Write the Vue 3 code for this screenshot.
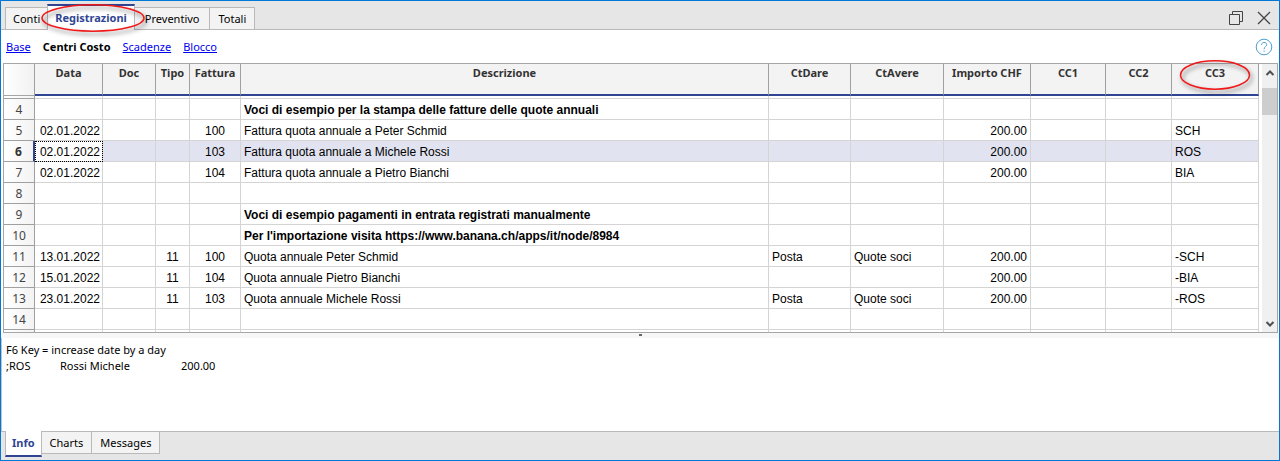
<script setup>
import { ref } from 'vue'

const tabs = ['Conti', 'Registrazioni', 'Preventivo', 'Totali']
const activeTab = ref('Registrazioni')

const views = ['Base', 'Centri Costo', 'Scadenze', 'Blocco']
const activeView = ref('Centri Costo')

const panels = ['Info', 'Charts', 'Messages']
const activePanel = ref('Info')

const columns = [
  { key: 'date', label: 'Data' },
  { key: 'doc', label: 'Doc' },
  { key: 'type', label: 'Tipo' },
  { key: 'invoice', label: 'Fattura' },
  { key: 'text', label: 'Descrizione' },
  { key: 'debit', label: 'CtDare' },
  { key: 'credit', label: 'CtAvere' },
  { key: 'amount', label: 'Importo CHF' },
  { key: 'cc1', label: 'CC1' },
  { key: 'cc2', label: 'CC2' },
  { key: 'cc3', label: 'CC3' },
]

const rows = [
  { n: 4, bold: true, text: 'Voci di esempio per la stampa delle fatture delle quote annuali' },
  { n: 5, date: '02.01.2022', invoice: '100', text: 'Fattura quota annuale a Peter Schmid', amount: '200.00', cc3: 'SCH' },
  { n: 6, date: '02.01.2022', invoice: '103', text: 'Fattura quota annuale a Michele Rossi', amount: '200.00', cc3: 'ROS' },
  { n: 7, date: '02.01.2022', invoice: '104', text: 'Fattura quota annuale a Pietro Bianchi', amount: '200.00', cc3: 'BIA' },
  { n: 8 },
  { n: 9, bold: true, text: 'Voci di esempio pagamenti in entrata registrati manualmente' },
  { n: 10, bold: true, text: "Per l'importazione visita https://www.banana.ch/apps/it/node/8984" },
  { n: 11, date: '13.01.2022', type: '11', invoice: '100', text: 'Quota annuale Peter Schmid', debit: 'Posta', credit: 'Quote soci', amount: '200.00', cc3: '-SCH' },
  { n: 12, date: '15.01.2022', type: '11', invoice: '104', text: 'Quota annuale Pietro Bianchi', amount: '200.00', cc3: '-BIA' },
  { n: 13, date: '23.01.2022', type: '11', invoice: '103', text: 'Quota annuale Michele Rossi', debit: 'Posta', credit: 'Quote soci', amount: '200.00', cc3: '-ROS' },
  { n: 14 },
]
const selected = ref(6)
</script>

<template>
  <main class="window">
    <header class="titlebar">
      <nav class="tabs" role="tablist">
        <button
          v-for="t in tabs" :key="t" type="button" role="tab" class="tab"
          :class="{ active: t === activeTab }" :aria-selected="t === activeTab"
          @click="activeTab = t"
        >
          {{ t }}
          <svg v-if="t === 'Registrazioni'" class="ring ring-tab" viewBox="0 0 112 36" aria-hidden="true">
            <ellipse cx="53" cy="16" rx="51" ry="13.2" />
          </svg>
        </button>
      </nav>
      <div class="controls">
        <button type="button" aria-label="Ripristina">
          <svg width="16" height="16" viewBox="0 0 16 16">
            <path d="M1.500 4.500h10v10h-10zM4.500 4.500v-3h10v10h-3" />
          </svg>
        </button>
        <button type="button" aria-label="Chiudi">
          <svg width="16" height="16" viewBox="0 0 16 16">
            <path class="cross" d="M2 2l12 12M14 2L2 14" />
          </svg>
        </button>
      </div>
    </header>

    <nav class="views">
      <template v-for="v in views" :key="v">
        <strong v-if="v === activeView">{{ v }}</strong>
        <a v-else href="#" @click.prevent="activeView = v">{{ v }}</a>
      </template>
      <button type="button" class="help" aria-label="Aiuto">
        <svg width="18" height="18" viewBox="0 0 18 18">
          <circle cx="9" cy="9" r="7.800" />
          <path d="M6.500 7c0-3.500 5.200-3.300 5.200-.4 0 2-2.600 2-2.600 4.600M9.100 12.600v1.300" />
        </svg>
      </button>
    </nav>

    <section class="grid">
      <table>
        <colgroup>
          <col class="c-n"><col v-for="c in columns" :key="c.key" :class="'c-' + c.key">
        </colgroup>
        <thead>
          <tr>
            <th class="corner"></th>
            <th v-for="c in columns" :key="c.key" scope="col">
              {{ c.label }}
              <svg v-if="c.key === 'cc3'" class="ring ring-col" viewBox="0 0 80 40" aria-hidden="true">
                <ellipse cx="37" cy="17" rx="34.500" ry="14.200" />
              </svg>
            </th>
          </tr>
        </thead>
        <tbody>
          <tr class="sliver"><th></th><td v-for="c in columns" :key="c.key"></td></tr>
          <tr
            v-for="r in rows" :key="r.n" :class="{ bold: r.bold, selected: r.n === selected }"
            @click="selected = r.n"
          >
            <th scope="row">{{ r.n }}</th>
            <td v-for="c in columns" :key="c.key" :class="'d-' + c.key">{{ r[c.key] }}</td>
          </tr>
          <tr class="sliver last"><th></th><td v-for="c in columns" :key="c.key"></td></tr>
        </tbody>
      </table>
      <div class="scrollbar">
        <button type="button" aria-label="Su">
          <svg width="10" height="8" viewBox="0 0 10 8"><path d="M1.500 6L5 2.500 8.500 6" /></svg>
        </button>
        <div class="track"><div class="thumb"></div></div>
        <button type="button" aria-label="Giù">
          <svg width="10" height="8" viewBox="0 0 10 8"><path d="M1.500 2L5 5.500 8.500 2" /></svg>
        </button>
      </div>
    </section>

    <div class="splitter"><i></i></div>

    <section class="info">
      <p>F6 Key = increase date by a day</p>
      <p class="account"><span>;ROS</span><span>Rossi Michele</span><span>200.00</span></p>
    </section>

    <nav class="panels" role="tablist">
      <button
        v-for="p in panels" :key="p" type="button" role="tab" class="panel"
        :class="{ active: p === activePanel }" :aria-selected="p === activePanel"
        @click="activePanel = p"
      >{{ p }}</button>
    </nav>
  </main>
</template>

<style>
body { margin: 0; }
</style>

<style scoped>
* { box-sizing: border-box; }
.window {
  display: flex;
  flex-direction: column;
  min-height: 100vh;
  border: 1px solid #0078d7;
  background: #fff;
  color: #000;
  font: 11px/16px "Noto Sans", "Open Sans", sans-serif;
}
button {
  margin: 0;
  padding: 0;
  border: 0;
  background: none;
  font: inherit;
  color: inherit;
}
svg { display: block; fill: none; }

.titlebar {
  display: flex;
  justify-content: space-between;
  height: 29px;
  background: #e6e6e6;
  border-bottom: 1px solid #b9b9b9;
}
.tabs { display: flex; align-items: flex-end; padding-left: 4px; }
.tab {
  position: relative;
  height: 23px;
  padding: 0 8px;
  border: 1px solid #b9b9b9;
  border-left-width: 0;
  background: #f3f3f3;
  margin-bottom: -1px;
  white-space: nowrap;
}
.tab:first-child { padding: 0 7px; border-left-width: 1px; border-right-width: 0; }
.tab.active {
  height: 26px;
  padding: 0 7px;
  border-top: 2px solid #2f4593;
  border-bottom: 0;
  border-left-width: 1px;
  background: #fff;
  color: #2f4593;
  font-weight: 700;
  z-index: 1;
}
.tab.active + .tab { padding: 0 10px; }
.ring {
  position: absolute;
  overflow: visible;
  stroke: #f01818;
  stroke-width: 1.5;
  filter: drop-shadow(2px 3px 2px rgba(0, 0, 0, 0.5));
  pointer-events: none;
}
.ring-tab { width: 112px; height: 36px; left: -8px; top: -4px; }
.ring-col { width: 80px; height: 40px; left: 6px; top: -6px; z-index: 2; }
.controls { display: flex; align-items: center; gap: 12px; padding: 5px 7px 0 0; }
.controls svg { stroke: #444; stroke-width: 1; }
.controls .cross { stroke-width: 1.3; }

.views {
  display: flex;
  align-items: center;
  gap: 12px;
  height: 33px;
  padding: 0 6px 0 5px;
}
.views a { color: #0000f0; }
.help { margin-left: auto; }
.help svg { stroke: #4f9fd6; stroke-width: 1; }

.grid {
  display: flex;
  margin: 0 1px 0 2px;
  border: 1px solid #a6a6a6;
}
table {
  flex: 1;
  min-width: 0;
  width: 100%;
  table-layout: fixed;
  border-collapse: separate;
  border-spacing: 0;
}
.c-n { width: 31px; }
.c-date { width: 68px; }
.c-doc { width: 53px; }
.c-type { width: 34px; }
.c-invoice { width: 51px; }
.c-debit { width: 82px; }
.c-credit { width: 93px; }
.c-amount { width: 87px; }
.c-cc1 { width: 75px; }
.c-cc2 { width: 66px; }
.c-cc3 { width: 87px; }
th, td { padding: 0; white-space: nowrap; }
thead th {
  position: relative;
  height: 32px;
  padding-bottom: 12px;
  border-right: 1px solid #a0a0a0;
  border-bottom: 2px solid #2f4593;
  background: #f3f3f3;
  color: #333;
  text-align: center;
  line-height: 18px;
}
thead .corner { border-bottom: 1px solid #a6a6a6; background: linear-gradient(90deg, #fff, #f1f1f1); }
tbody th {
  padding: 1px 0 0;
  border-right: 1px solid #a0a0a0;
  border-bottom: 1px solid #a0a0a0;
  background: linear-gradient(90deg, #fff, #f3f3f3);
  color: #444;
  font-size: 12px;
  font-weight: 400;
}
tbody td {
  height: 21px;
  padding: 2px 3px 0;
  border-right: 1px solid #d4d4d4;
  border-bottom: 1px solid #d4d4d4;
  font: 12px/16px "Liberation Sans", Arial, sans-serif;
}
.d-date, .d-amount { text-align: right; }
tbody .d-date { padding: 2px 2px 0; }
.d-type, .d-invoice { text-align: center; }
.bold td { font-weight: 700; }
.selected td { background: #e1e3f0; }
.selected th { border-right: 2px solid #2f4593; font-weight: 700; color: #333; }
.selected .d-date {
  background: #fff;
  outline: 1px dotted #000;
  outline-offset: -1px;
}
tbody .sliver th, tbody .sliver td { height: 3px; padding: 0; line-height: 0; }
tbody .last th, tbody .last td { height: 2px; border-bottom: 0; }

.scrollbar {
  display: flex;
  flex-direction: column;
  width: 15px;
  margin-left: 3px;
  background: #f0f0f0;
}
.scrollbar button { display: grid; place-items: center; height: 17px; }
.scrollbar svg { stroke: #505050; stroke-width: 2; }
.track { flex: 1; padding-top: 7px; }
.thumb { height: 27px; background: #cdcdcd; }

.splitter { display: grid; justify-items: center; height: 5px; background: #f7f7f7; }
.splitter i { width: 3px; height: 2px; margin-top: 1px; background: #666; }

.info {
  flex: 1;
  padding: 4px 5px 0 4px;
  border-left: 1px solid #c4c4c4;
}
.info p { margin: 0; }
.account { display: grid; grid-template-columns: 54px 121px auto; justify-content: start; }

.panels {
  display: flex;
  align-items: flex-start;
  height: 29px;
  padding-left: 4px;
  border-top: 1px solid #b9b9b9;
  background: #e6e6e6;
}
.panel {
  height: 23px;
  margin-top: -1px;
  padding: 0 8px;
  border: 1px solid #b9b9b9;
  border-left-width: 0;
  background: #f3f3f3;
}
.panel.active {
  height: 26px;
  padding: 0 6px;
  border-width: 0 1px 2px;
  border-bottom-color: #2f4593;
  background: #fff;
  color: #2f4593;
  font-weight: 700;
}
</style>
